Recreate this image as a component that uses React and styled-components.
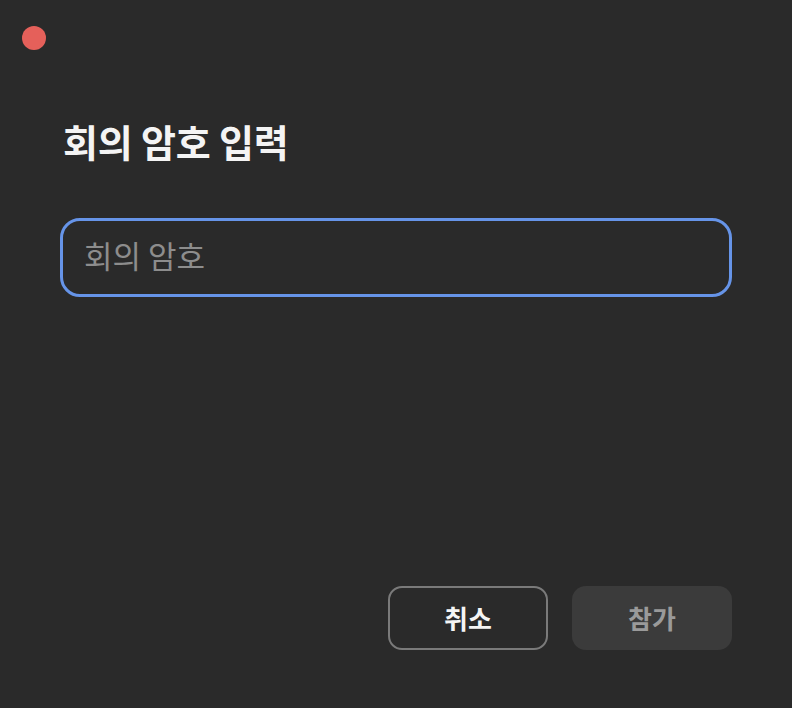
import React from 'react'
import styled, { createGlobalStyle } from 'styled-components'

const Global = createGlobalStyle`
  html, body { margin: 0; padding: 0; background: #2a2a2a; }
  body { font-family: "Noto Sans CJK KR", "Noto Sans", sans-serif; }
`

const Window = styled.div`
  width: 792px;
  height: 708px;
  box-sizing: border-box;
  background: #2a2a2a;
  display: flex;
  flex-direction: column;
  padding: 26px 60px 58px 60px;
`

const TitleBar = styled.div`
  display: flex;
  align-items: center;
  height: 24px;
  margin-left: -38px;
`

const CloseDot = styled.span`
  width: 24px;
  height: 24px;
  border-radius: 50%;
  background: #e5605a;
`

const Title = styled.h1`
  margin: 72px 0 0 3px;
  font-size: 38px;
  font-weight: 700;
  color: #f4f4f4;
  line-height: 1;
  letter-spacing: -0.2px;
`

const Input = styled.input`
  margin-top: 58px;
  height: 79px;
  box-sizing: border-box;
  border: 3px solid #6694e8;
  border-radius: 20px;
  background: transparent;
  padding: 0 21px 6px;
  font-family: inherit;
  font-size: 31px;
  color: #eee;
  outline: none;
  &::placeholder { color: #8d8d8d; }
`

const Footer = styled.div`
  margin-top: auto;
  display: flex;
  justify-content: flex-end;
  gap: 24px;
`

const Button = styled.button`
  width: 160px;
  height: 64px;
  box-sizing: border-box;
  border-radius: 14px;
  font-family: inherit;
  font-size: 26px;
  font-weight: 700;
  padding-bottom: 3px;
  border: ${p => (p.$primary ? 'none' : '2px solid #7a7a7a')};
  background: ${p => (p.$primary ? '#3b3b3b' : 'transparent')};
  color: ${p => (p.$primary ? '#9a9a9a' : '#f4f4f4')};
`

export default function App() {
  return (
    <Window>
      <Global />
      <TitleBar>
        <CloseDot />
      </TitleBar>
      <Title>회의 암호 입력</Title>
      <Input placeholder="회의 암호" />
      <Footer>
        <Button>취소</Button>
        <Button $primary>참가</Button>
      </Footer>
    </Window>
  )
}
